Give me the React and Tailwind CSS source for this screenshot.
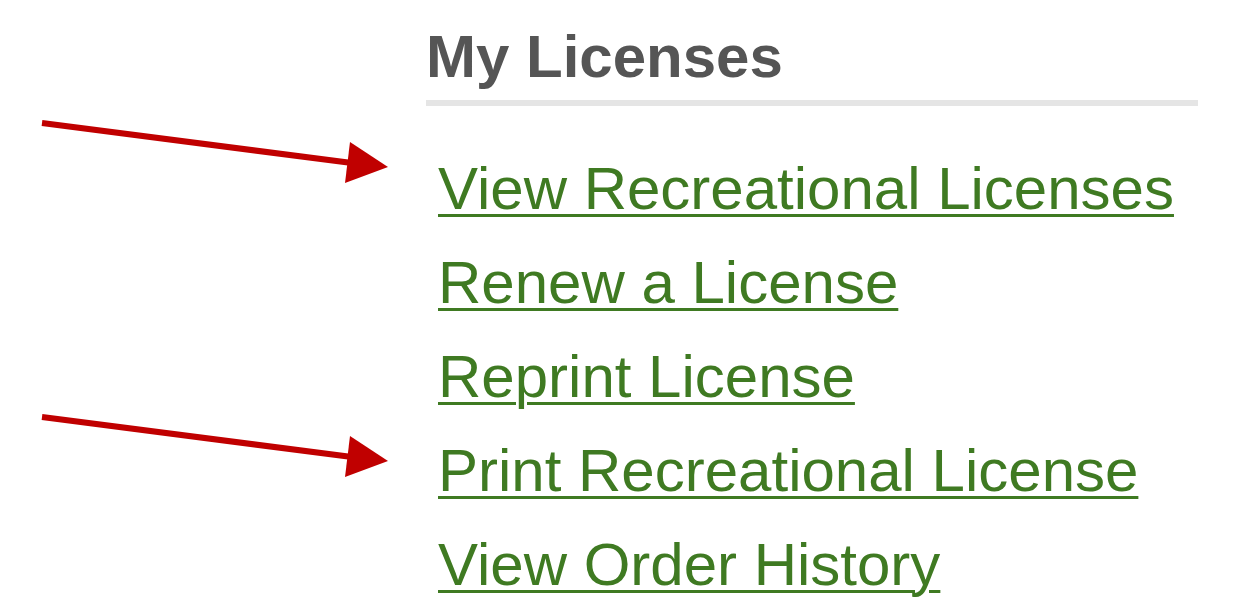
import React from "react";

const links = [
  "View Recreational Licenses",
  "Renew a License",
  "Reprint License",
  "Print Recreational License",
  "View Order History",
];

function Arrow({ className }) {
  return (
    <svg
      className={className}
      width="400"
      height="70"
      viewBox="0 0 400 70"
      xmlns="http://www.w3.org/2000/svg"
    >
      <line x1="42" y1="4" x2="352" y2="44" stroke="#c00000" strokeWidth="6" />
      <polygon points="350,23 388,48 345,64" fill="#c00000" />
    </svg>
  );
}

export default function App() {
  return (
    <div
      className="relative w-[1244px] h-[616px] bg-white overflow-hidden"
      style={{ fontFamily: '"Liberation Sans", Arial, sans-serif' }}
    >
      <Arrow className="absolute left-0 top-[119px]" />
      <Arrow className="absolute left-0 top-[413px]" />

      <div className="ml-[426px] w-[772px] pt-[27px]">
        <h2 className="text-[60px] leading-[60px] font-bold text-[#555555]">
          My Licenses
        </h2>
        <div className="mt-[13px] h-[6px] bg-[#e5e5e5]" />
        <ul className="mt-[36px] pl-[12px]">
          {links.map((label) => (
            <li key={label} className="text-[60px] leading-[94px]">
              <a
                href="#"
                className="text-[#3f7a22] underline decoration-[3px] underline-offset-[5px]"
              >
                {label}
              </a>
            </li>
          ))}
        </ul>
      </div>
    </div>
  );
}
